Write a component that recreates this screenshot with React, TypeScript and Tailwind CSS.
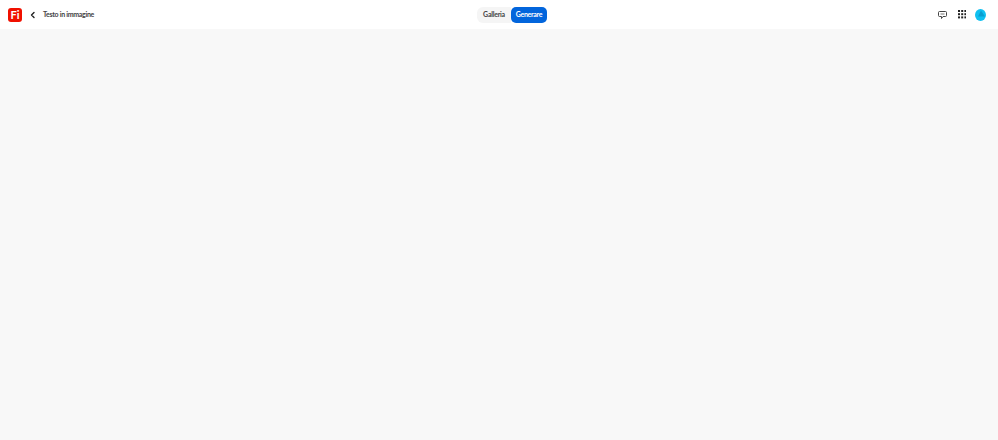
const dots = [0, 3.2, 6.4];

const App = () => {
    return (
        <div className="h-[440px] w-[998px] flex flex-col bg-[#f8f8f8] font-['Lato','Noto_Sans',sans-serif] overflow-hidden">
            <header className="h-[29px] bg-white grid grid-cols-[469px_auto_1fr] items-center pl-2 pr-3">
                <div className="flex items-center">
                    <div className="w-[14px] h-[14px] rounded-[3px] bg-[#f01000] flex items-center justify-center text-white text-[11px] font-bold leading-none">
                        Fi
                    </div>
                    <svg width="6" height="8" viewBox="0 0 6 8" className="ml-[8px]">
                        <path d="M4 1.5 L1.5 4 L4 6.5" fill="none" stroke="#222" strokeWidth="1.4" strokeLinecap="round" strokeLinejoin="round" />
                    </svg>
                    <span className="ml-[7px] text-[7px] font-bold text-[#444] tracking-[-0.3px]">Testo in immagine</span>
                </div>
                <div className="flex items-center">
                    <button className="w-[34px] h-[16px] rounded-l-[6px] bg-[#f5f5f5] text-[7px] font-bold text-[#444] tracking-[-0.25px]">
                        Galleria
                    </button>
                    <button className="w-[36px] h-[16px] rounded-[5px] bg-[#0265dc] text-[7px] font-bold text-white tracking-[-0.3px]">
                        Generare
                    </button>
                </div>
                <div className="flex items-center justify-end gap-[9px]">
                    <svg width="9" height="8" viewBox="0 0 9 8" className="mr-[2px]">
                        <path d="M1.5 .5 H7.5 A1 1 0 0 1 8.5 1.5 V4.5 A1 1 0 0 1 7.5 5.5 H5 L3.5 7.5 V5.5 H1.5 A1 1 0 0 1 .5 4.5 V1.5 A1 1 0 0 1 1.5 .5 Z" fill="none" stroke="#444" strokeWidth="1" strokeLinejoin="round" />
                        <path d="M2.5 3 H6.5" stroke="#777" strokeWidth="1" />
                    </svg>
                    <svg width="8.4" height="8.4" viewBox="0 0 8.4 8.4" fill="#222">
                        {dots.map(y =>
                            dots.map(x => <rect key={`${x}-${y}`} x={x} y={y} width="2" height="2" />),
                        )}
                    </svg>
                    <svg width="11" height="12" viewBox="0 0 11 12">
                        <ellipse cx="5.5" cy="6" rx="5.5" ry="6" fill="#0fc0f0" />
                        <path d="M6 1.5 L10 7.5 H3 Z" fill="#0a9ed0" />
                    </svg>
                </div>
            </header>
            <main className="flex-1" />
        </div>
    );
};

export default App;
